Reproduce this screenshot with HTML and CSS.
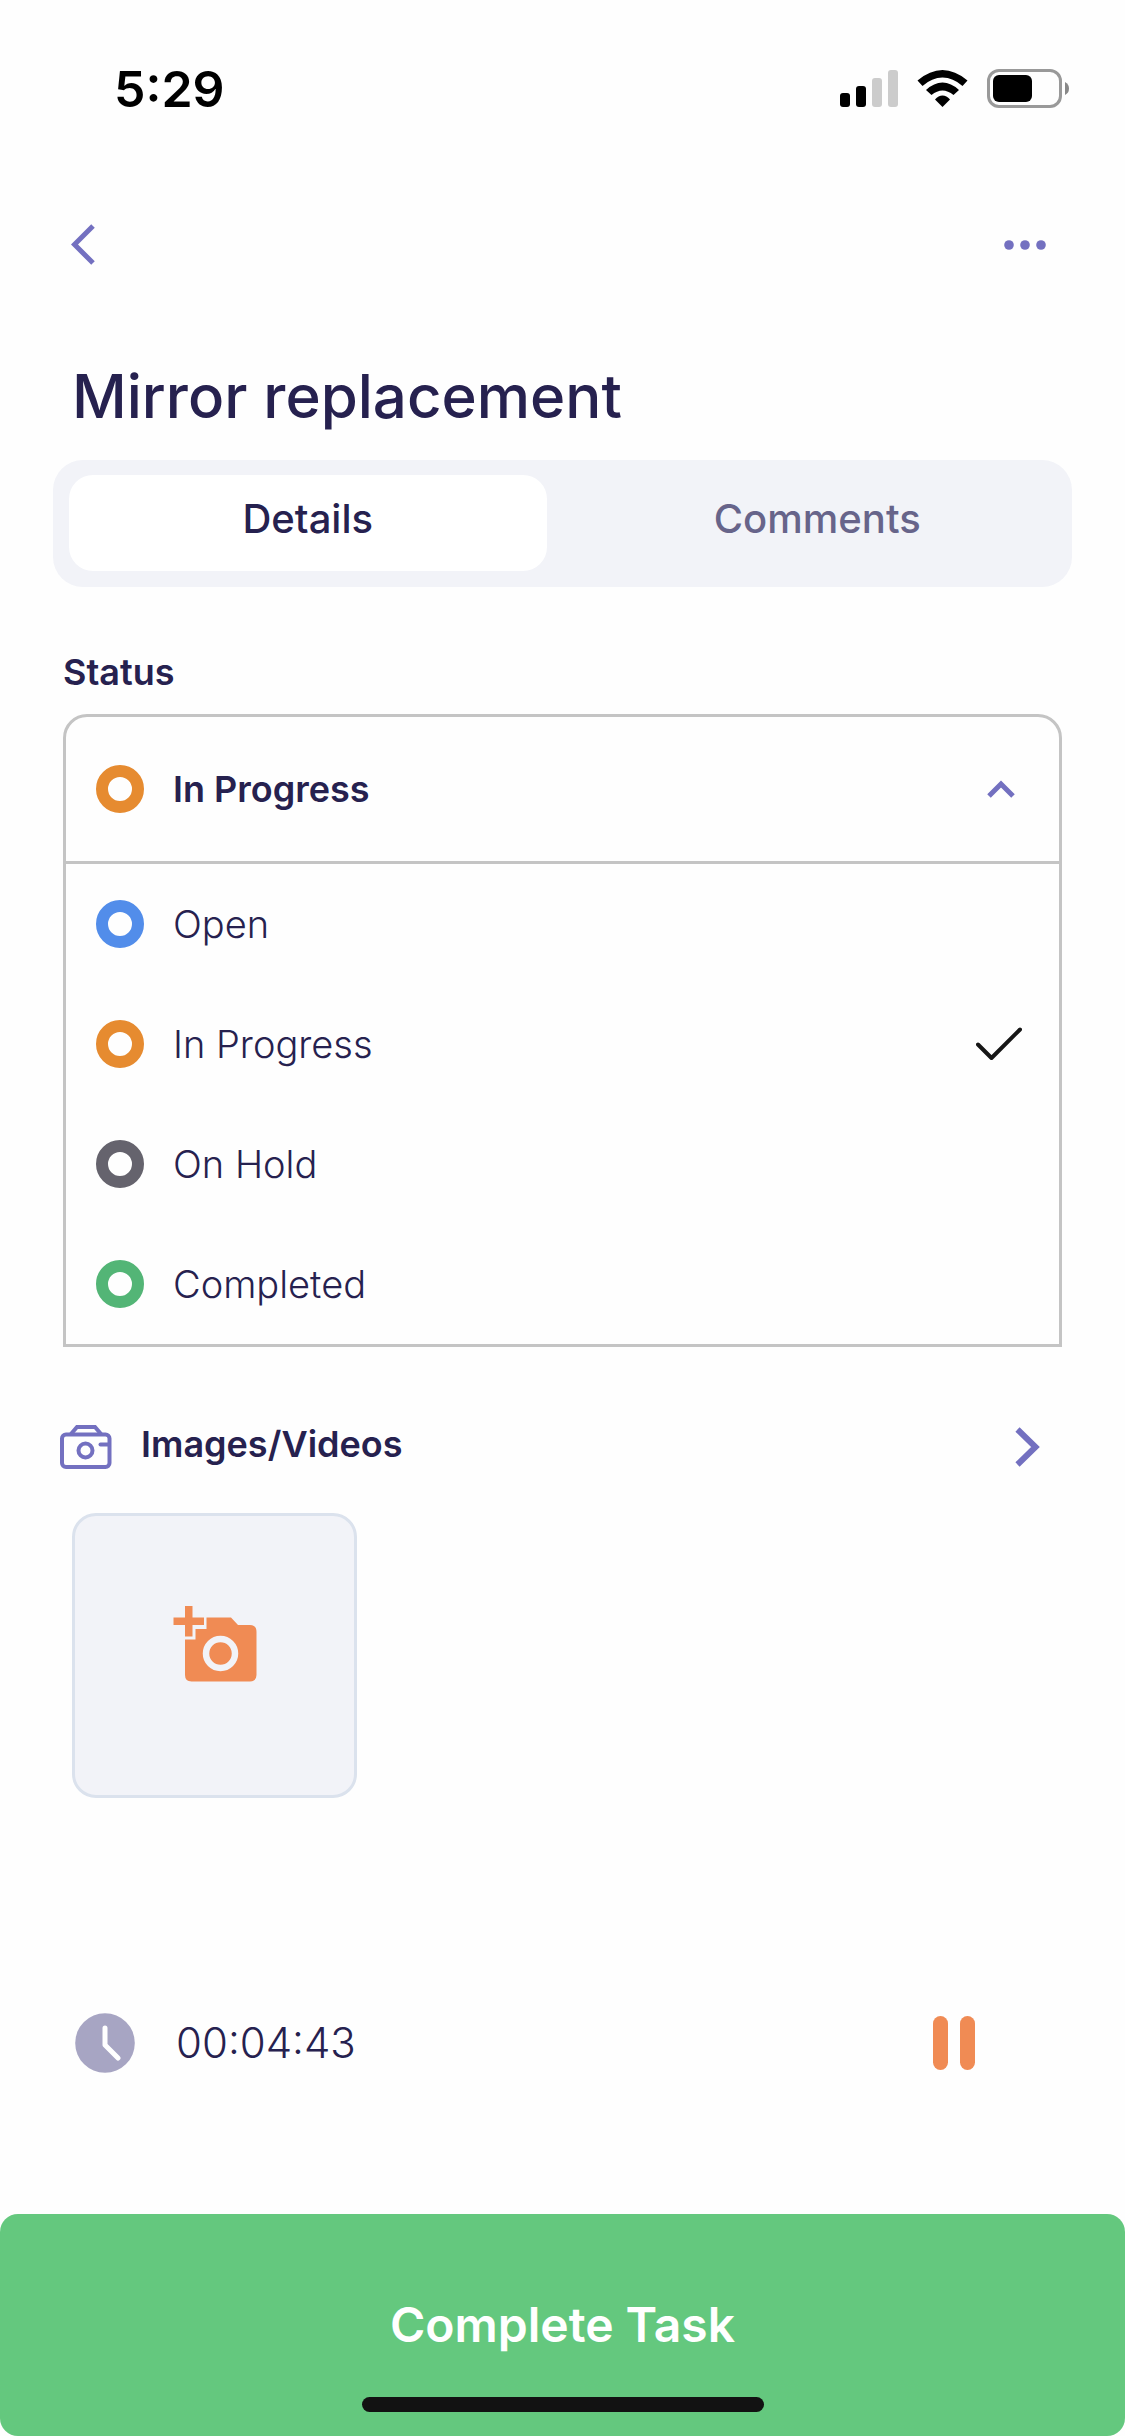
FILE: index.html
```html
<!DOCTYPE html>
<html lang="en">
<head>
<meta charset="utf-8">
<meta name="viewport" content="width=device-width, initial-scale=1">
<title>Mirror replacement</title>
<link rel="stylesheet" href="styles.css">
</head>
<body>
<div class="statusbar">
  <span class="time">5:29</span>
  <svg class="system-icons" width="230" height="40" viewBox="0 0 230 40" aria-hidden="true">
    <!-- signal -->
    <rect x="0" y="24" width="10" height="14" rx="3"/>
    <rect x="16" y="17" width="10" height="21" rx="3"/>
    <rect x="32" y="9" width="10" height="29" rx="3" fill="#ccc"/>
    <rect x="48" y="1" width="10" height="37" rx="3" fill="#ccc"/>
    <!-- wifi -->
    <path d="M77.500 11.500 Q90 1 102.500 1 Q115 1 127.500 11.500 L122.500 17 Q113 8.500 102.500 8.500 Q92 8.500 82.500 17 Z"/>
    <path d="M86 21 Q94 13.500 102.500 13.500 Q111 13.500 119 21 L113.500 26 Q108 21.500 102.500 21.500 Q97 21.500 91.500 26 Z"/>
    <path d="M95 30.500 Q98.500 26.500 102.500 26.500 Q106.500 26.500 110 30.500 L102.500 38 Z"/>
    <!-- battery -->
    <rect x="148.500" y="1.500" width="72" height="36" rx="10.500" fill="none" stroke="#999" stroke-width="3"/>
    <rect x="153" y="6" width="39" height="27" rx="6"/>
    <path d="M225 13 Q229 15 229 19.500 Q229 24 225 26 Z" fill="#888"/>
  </svg>
</div>

<nav class="topnav">
  <button class="icon-btn" type="button" aria-label="Back">
    <svg width="24" height="42" viewBox="0 0 24 42"><path d="M22 2 L3.500 20.500 L22 39" fill="none" stroke="#7370c0" stroke-width="5"/></svg>
  </button>
  <button class="icon-btn" type="button" aria-label="More options">
    <svg width="42" height="10" viewBox="0 0 42 10" fill="#7370c0"><circle cx="5" cy="5" r="4.800"/><circle cx="21" cy="5" r="4.800"/><circle cx="37" cy="5" r="4.800"/></svg>
  </button>
</nav>

<main>
  <h1>Mirror replacement</h1>

  <div class="tabs" role="tablist">
    <button class="tab active" type="button" role="tab" aria-selected="true">Details</button>
    <button class="tab" type="button" role="tab" aria-selected="false">Comments</button>
  </div>

  <section class="status">
    <h2 id="status-label">Status</h2>
    <div class="dropdown">
      <button class="current" type="button" aria-expanded="true">
        <span class="ring in-progress"></span>
        <span class="name">In Progress</span>
        <svg class="mark" width="28" height="18" viewBox="0 0 28 18"><path d="M2 16 L14 4 L26 16" fill="none" stroke="#7370c0" stroke-width="5"/></svg>
      </button>
      <div class="options" role="radiogroup" aria-labelledby="status-label">
        <label class="option">
          <input class="ring open" type="radio" name="status">
          <span class="name">Open</span>
        </label>
        <label class="option">
          <input class="ring in-progress" type="radio" name="status" checked>
          <span class="name">In Progress</span>
          <svg class="mark" width="46" height="34" viewBox="0 0 46 34"><path d="M2 17.500 L15.500 31 L44 2.500" fill="none" stroke="#161616" stroke-width="4" stroke-linecap="round" stroke-linejoin="round"/></svg>
        </label>
        <label class="option">
          <input class="ring on-hold" type="radio" name="status">
          <span class="name">On Hold</span>
        </label>
        <label class="option">
          <input class="ring completed" type="radio" name="status">
          <span class="name">Completed</span>
        </label>
      </div>
    </div>
  </section>

  <section class="media">
    <a class="media-head" href="#media">
      <svg width="52" height="44" viewBox="0 0 52 44" fill="none" stroke="#7370c0" stroke-width="4">
        <rect x="2" y="9.500" width="47.500" height="32.500" rx="4"/>
        <path d="M11 9 L17 2 H35 L41 9"/>
        <circle cx="25.500" cy="25.500" r="7"/>
        <path d="M40.500 19.500 H49" stroke-linecap="round"/>
      </svg>
      <h2>Images/Videos</h2>
      <svg width="26" height="40" viewBox="0 0 26 40"><path d="M2.500 2.500 L20.500 20 L2.500 37.500" fill="none" stroke="#7370c0" stroke-width="6"/></svg>
    </a>
    <button class="add-photo" type="button" aria-label="Add photo" id="media">
      <svg width="84" height="76" viewBox="0 0 84 76">
        <path d="M33.500 11.500 H58 L65 19 H77 Q83.500 19 83.500 26 V69 Q83.500 75.500 77 75.500 H18.500 Q12 75.500 12 69 V33.500 H22.500 V23 H33.500 Z" fill="#f08b54"/>
        <path d="M12 0 H19.500 V11.500 H31 V19 H19.500 V30.500 H12 V19 H0.500 V11.500 H12 Z" fill="#f08b54"/>
        <circle cx="47.500" cy="47.500" r="14.500" fill="none" stroke="#f2f3f8" stroke-width="6.500"/>
      </svg>
    </button>
  </section>
</main>

<div class="timer">
  <svg width="60" height="60" viewBox="0 0 60 60"><circle cx="30" cy="30" r="29.800" fill="#a7a5c3"/><path d="M30 15 V32 L43 45" fill="none" stroke="#fff" stroke-width="5" stroke-linecap="round" stroke-linejoin="round"/></svg>
  <span class="elapsed">00:04:43</span>
  <button class="icon-btn" type="button" aria-label="Pause">
    <svg width="42" height="54" viewBox="0 0 42 54" fill="#f08b54"><rect width="15" height="54" rx="7.500"/><rect x="27" width="15" height="54" rx="7.500"/></svg>
  </button>
</div>

<footer>
  <button class="complete" type="button">Complete Task</button>
  <div class="home-indicator"></div>
</footer>
</body>
</html>
```
FILE: styles.css
```css
* {
  box-sizing: border-box;
}
body {
  margin: 0;
  min-height: 100vh;
  display: flex;
  flex-direction: column;
  background: #fefefe;
  color: #26214f;
  font-family: Inter, "Liberation Sans", sans-serif;
  font-size: 36px;
  line-height: 48px;
}
button {
  font: inherit;
  color: inherit;
  background: none;
  border: none;
  padding: 0;
  margin: 0;
}
svg {
  display: block;
  flex-shrink: 0;
}
h1, h2 {
  margin: 0;
}
h2 {
  font-size: 36px;
  font-weight: 600;
}

/* top */
.statusbar {
  display: flex;
  align-items: center;
  justify-content: space-between;
  height: 178px;
  padding: 0 55px 0 114px;
  color: #000;
}
.time {
  font-size: 50px;
  font-weight: 600;
}
.topnav {
  display: flex;
  align-items: center;
  justify-content: space-between;
  height: 134px;
  padding: 0 79px 0 71px;
}

/* content */
main {
  padding: 46px 53px 0;
}
h1 {
  padding-left: 19px;
  font-size: 60px;
  font-weight: 500;
  line-height: 76px;
}
.tabs {
  display: flex;
  gap: 32px;
  margin-top: 26px;
  padding: 15px 16px 16px;
  border-radius: 30px;
  background: #f2f3f8;
}
.tab {
  flex: 1;
  height: 96px;
  padding-bottom: 8px;
  border-radius: 24px;
  font-size: 40px;
  font-weight: 500;
  color: #67648a;
}
.tab.active {
  background: #fff;
  color: #26214f;
}

.status {
  padding: 61px 10px 0;
}
.dropdown {
  margin-top: 18px;
  border: 3px solid #c4c4c4;
  border-radius: 24px 24px 0 0;
}
.current,
.option {
  display: flex;
  align-items: center;
  gap: 29px;
  width: 100%;
  padding: 0 30px;
}
.current {
  height: 147px;
  border-bottom: 3px solid #c4c4c4;
  font-weight: 600;
  text-align: left;
}
.option {
  height: 120px;
  font-size: 38px;
  font-weight: 300;
}
.name {
  flex: 1;
}
.ring {
  appearance: none;
  flex-shrink: 0;
  width: 48px;
  height: 48px;
  margin: 0;
  border: 12px solid;
  border-radius: 50%;
}
.open { border-color: #528dea; }
.in-progress { border-color: #e68b30; }
.on-hold { border-color: #65636d; }
.completed { border-color: #53b576; }
.mark {
  margin-right: 7px;
}
.current .mark {
  margin-right: 14px;
}

.media {
  padding: 64px 31px 0 7px;
}
.media-head {
  display: flex;
  align-items: center;
  gap: 29px;
  height: 72px;
  color: inherit;
  text-decoration: none;
}
.media-head h2 {
  flex: 1;
  padding-bottom: 6px;
}
.add-photo {
  display: flex;
  align-items: center;
  justify-content: center;
  width: 285px;
  height: 285px;
  margin: 30px 0 0 12px;
  border: 3px solid #dbe2ed;
  border-radius: 24px;
  background: #f2f3f8;
}
.add-photo svg {
  margin-bottom: 24px;
}

/* bottom */
.timer {
  display: flex;
  align-items: center;
  gap: 41px;
  margin-top: auto;
  padding: 60px 150px 141px 75px;
}
.elapsed {
  flex: 1;
  font-size: 42px;
  font-weight: 300;
}
footer {
  position: relative;
}
.complete {
  display: block;
  width: 100%;
  height: 222px;
  border-radius: 18px;
  background: #64c87e;
  color: #fff;
  font-size: 48px;
  font-weight: 600;
}
.home-indicator {
  position: absolute;
  bottom: 24px;
  left: 50%;
  width: 402px;
  height: 15px;
  margin-left: -201px;
  border-radius: 8px;
  background: #121212;
}
```
